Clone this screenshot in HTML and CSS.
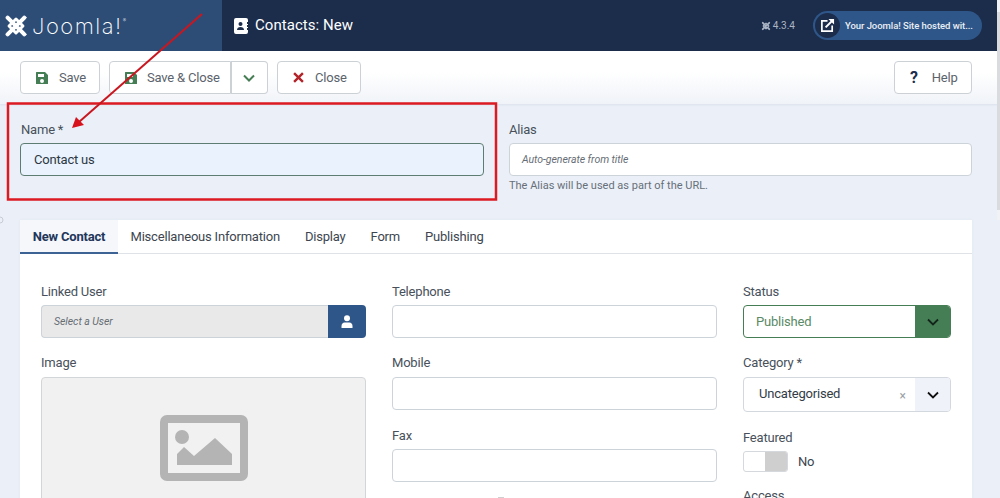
FILE: index.html
```html
<!DOCTYPE html>
<html lang="en">
<head>
<meta charset="utf-8">
<title>Contacts: New</title>
<link rel="stylesheet" href="styles.css">
</head>
<body>
<header class="topbar">
  <div class="brand">
    <svg class="brand-mark" viewBox="0 0 28 28" aria-hidden="true"><g fill="none" stroke="#fff" stroke-linecap="round" stroke-linejoin="round"><path stroke-width="4.400" d="M6 6 22 22M22 6 6 22"/><path stroke-width="3.200" d="M14 6.500 21.500 14 14 21.500 6.500 14z"/><circle cx="5" cy="5" r="1.800" fill="#fff"/><circle cx="23" cy="5" r="1.800" fill="#fff"/><circle cx="5" cy="23" r="1.800" fill="#fff"/><circle cx="23" cy="23" r="1.800" fill="#fff"/></g></svg>
    <span class="brand-name">Joomla!<sup>®</sup></span>
  </div>
  <div class="bar-main">
    <h1 class="page-title">
      <svg class="title-icon" viewBox="0 0 14 16" aria-hidden="true"><path fill="#fff" d="M2 0h10a2 2 0 0 1 2 2v2h-1v2h1v1h-1v2h1v1h-1v2h1v2a2 2 0 0 1-2 2H2a2 2 0 0 1-2-2V2a2 2 0 0 1 2-2z"/><circle cx="6.500" cy="6" r="2" fill="#1c2d4c"/><path fill="#1c2d4c" d="M3 12c0-2 1.400-3 3.500-3s3.500 1 3.500 3z"/></svg>
      <span class="title-text">Contacts: New</span>
    </h1>
    <div class="version">
      <svg class="version-mark" viewBox="0 0 28 28" aria-hidden="true"><g fill="none" stroke="#aab4c4" stroke-linecap="round" stroke-linejoin="round"><path stroke-width="5" d="M5 5 23 23M23 5 5 23"/><path stroke-width="3" d="M14 6 22 14 14 22 6 14z"/></g></svg>
      4.3.4
    </div>
    <div class="site-pill">
      <span class="pill-icon"><svg viewBox="0 0 16 16" aria-hidden="true"><path fill="none" stroke="#fff" stroke-width="1.800" d="M8 3H2v11h11V8"/><path fill="none" stroke="#fff" stroke-width="2.200" d="M6 10 14 2"/><path fill="#fff" d="M9 1h6v6z"/></svg></span>
      <span class="pill-text">Your Joomla! Site hosted wit...</span>
    </div>
  </div>
</header>

<nav class="toolbar">
  <button class="btn btn-save"><svg class="ico" viewBox="0 0 14 14" aria-hidden="true"><path fill="#457d54" fill-rule="evenodd" d="M1.500 1H10l3 3v8.500a.5.5 0 0 1-.5.5h-11a.5.5 0 0 1-.5-.5v-11a.5.5 0 0 1 .5-.5zM3 3v3h6V3zm4 5a2 2 0 1 0 0 4 2 2 0 0 0 0-4z"/></svg>Save</button>
  <div class="btn-group">
    <button class="btn btn-main"><svg class="ico" viewBox="0 0 14 14" aria-hidden="true"><path fill="#457d54" fill-rule="evenodd" d="M1.500 1H10l3 3v8.500a.5.5 0 0 1-.5.5h-11a.5.5 0 0 1-.5-.5v-11a.5.5 0 0 1 .5-.5zM3 3v3h6V3zm4 5a2 2 0 1 0 0 4 2 2 0 0 0 0-4z"/></svg>Save &amp; Close</button>
    <button class="btn btn-caret"><svg class="chev" viewBox="0 0 12 8" aria-hidden="true"><path fill="none" stroke="#457d54" stroke-width="2" d="M1 1.500 6 6.500 11 1.500"/></svg></button>
  </div>
  <button class="btn btn-close"><svg class="ico ico-x" viewBox="0 0 10 10" aria-hidden="true"><path stroke="#b2232a" stroke-width="2.200" d="M1 1 9 9M9 1 1 9"/></svg>Close</button>
  <button class="btn btn-help"><span class="help-mark">?</span>Help</button>
</nav>

<main class="content">
  <section class="title-row">
    <div class="field">
      <label class="label label-name">Name *</label>
      <div class="input input-filled">Contact us</div>
    </div>
    <div class="field">
      <label class="label">Alias</label>
      <div class="input input-hint">Auto-generate from title</div>
      <p class="help-text">The Alias will be used as part of the URL.</p>
    </div>
  </section>

  <section class="card">
    <div class="tabs">
      <div class="tab tab-active">New Contact</div>
      <div class="tab">Miscellaneous Information</div>
      <div class="tab">Display</div>
      <div class="tab">Form</div>
      <div class="tab">Publishing</div>
    </div>
    <div class="columns">
      <div class="col">
        <div class="field-row">
          <label class="label">Linked User</label>
          <div class="user-select">
            <div class="user-value">Select a User</div>
            <div class="user-btn"><svg viewBox="0 0 12 13" aria-hidden="true"><circle cx="6" cy="3.300" r="3" fill="#fff"/><path fill="#fff" d="M0.500 13v-2c0-2 1.500-3.500 3-3.500h5c1.500 0 3 1.500 3 3.500v2z"/></svg></div>
          </div>
        </div>
        <div class="field-row">
          <label class="label label-up">Image</label>
          <div class="image-box">
            <svg class="image-ph" viewBox="0 0 88 66" aria-hidden="true"><rect x="4" y="4" width="80" height="58" rx="3" fill="none" stroke="#b4b4b4" stroke-width="8"/><circle cx="22" cy="22" r="7" fill="#b4b4b4"/><path fill="#b4b4b4" d="M17 50V39l7-7 10 9 21-18 17 16v11z"/></svg>
          </div>
        </div>
      </div>
      <div class="col">
        <div class="field-row"><label class="label">Telephone</label><div class="input"></div></div>
        <div class="field-row"><label class="label label-up">Mobile</label><div class="input"></div></div>
        <div class="field-row"><label class="label">Fax</label><div class="input"></div></div>
      </div>
      <div class="col">
        <div class="field-row">
          <label class="label">Status</label>
          <div class="status-select">
            <span class="status-value">Published</span>
            <span class="status-btn"><svg class="chev" viewBox="0 0 12 8" aria-hidden="true"><path fill="none" stroke="#12241a" stroke-width="1.800" d="M1 1.500 6 6.500 11 1.500"/></svg></span>
          </div>
        </div>
        <div class="field-row">
          <label class="label label-up">Category *</label>
          <div class="cat-select">
            <span class="cat-value">Uncategorised</span>
            <span class="cat-clear">×</span>
            <span class="cat-btn"><svg class="chev" viewBox="0 0 12 8" aria-hidden="true"><path fill="none" stroke="#111" stroke-width="1.800" d="M1 1.500 6 6.500 11 1.500"/></svg></span>
          </div>
        </div>
        <div class="field-row field-featured">
          <label class="label">Featured</label>
          <div class="toggle-row">
            <span class="toggle"><span class="toggle-off"></span></span>
            <span class="toggle-text">No</span>
          </div>
        </div>
        <div class="field-row">
          <label class="label">Access</label>
        </div>
      </div>
    </div>
  </section>
</main>

<div class="scrollbar"><div class="scroll-thumb"></div></div>

<svg class="annot" viewBox="0 0 1000 498" aria-hidden="true">
  <circle cx="0" cy="220" r="3" fill="none" stroke="#c6cbd4"/>
  <path d="M498 497.500h6" stroke="#cfcfcf"/>
  <rect x="8" y="103.500" width="488" height="96" fill="none" stroke="#dc1a22" stroke-width="2.500"/>
  <path d="M202 14 79 122" stroke="#c9161f" stroke-width="2" fill="none"/>
  <path d="M72 128 76 117 84 125z" fill="#d8121c"/>
</svg>
</body>
</html>
```

FILE: styles.css
```css
* { box-sizing: border-box; }
html, body { margin: 0; height: 498px; overflow: hidden; }
body { background: #ebf0f8; font-family: Roboto, "Liberation Sans", sans-serif; font-size: 13px; letter-spacing: -.2px; color: #3b4450; position: relative; }

.topbar { display: flex; height: 51px; background: #1c2d4c; color: #fff; }
.brand { width: 222px; background: #2d4d77; display: flex; align-items: center; padding-left: 3px; }
.brand-mark { width: 26px; height: 26px; }
.brand-name { font-family: Inter, sans-serif; font-weight: 200; font-size: 22px; margin-left: 3px; letter-spacing: 1.500px; line-height: 1; }
.brand-name sup { font-size: 5px; vertical-align: 12px; line-height: 0; letter-spacing: 0; }
.bar-main { flex: 1; display: flex; align-items: center; padding: 0 18px 0 12px; }
.page-title { display: flex; align-items: center; gap: 7px; margin: 0; font-size: 15px; font-weight: 400; letter-spacing: .05px; flex: 1; }
.title-text { margin-bottom: 2px; }
.title-icon { width: 14px; height: 16px; }
.version { display: flex; align-items: center; gap: 2px; font-size: 10px; letter-spacing: 0; color: #aab4c4; margin-right: 18px; }
.version-mark { width: 10px; height: 10px; }
.site-pill { width: 169px; height: 29px; display: flex; align-items: center; background: #2f5688; border-radius: 15px; padding-left: 2px; }
.pill-icon { width: 25px; height: 25px; border-radius: 50%; background: #1c2d4c; display: flex; align-items: center; justify-content: center; }
.pill-icon svg { width: 15px; height: 15px; }
.pill-text { font-size: 9.500px; letter-spacing: -.05px; font-weight: 500; margin-left: 5px; white-space: nowrap; color: #e9eef5; }

.toolbar { height: 53px; display: flex; align-items: center; gap: 9px; padding: 0 28px 0 20px; background: linear-gradient(#fff 40%, #f0f3f8); box-shadow: 0 1px 2px rgba(30,50,80,.08); }
.btn { height: 33px; display: inline-flex; align-items: center; white-space: nowrap; background: #fff; border: 1px solid #ccd1d6; border-radius: 4px; padding: 0 14px; font: 400 13px Roboto, sans-serif; letter-spacing: -.2px; color: #5b636c; }
.btn-save { width: 80px; }
.ico { width: 14px; height: 14px; margin-right: 10px; flex: none; }
.ico-x { width: 11px; height: 11px; margin-right: 11px; margin-left: 1px; }
.chev { width: 12px; height: 8px; }
.btn-group { display: flex; }
.btn-main { border-radius: 4px 0 0 4px; width: 122px; }
.btn-main .ico { margin-right: 9px; }
.btn-caret { border-left: 0; border-radius: 0 4px 4px 0; width: 37px; padding: 0; justify-content: center; box-shadow: inset 1px 0 0 #ccd1d6; }
.btn-close { width: 84px; }
.btn-help { margin-left: auto; width: 78px; padding-left: 15px; }
.help-mark { font-weight: 700; font-size: 16px; color: #1c2d4c; width: 11px; margin-right: 14px; text-align: center; }

.content { padding: 0 28px 0 20px; }
.title-row { display: grid; grid-template-columns: 464px 463px; column-gap: 25px; padding-top: 17px; height: 116px; }
.field { display: flex; flex-direction: column; }
.label { display: block; height: 22px; line-height: 18px; font-size: 13px; color: #48515b; }
.label-name { padding-left: 1px; }
.label-up { line-height: 16px; }
.input { height: 33px; background: #fff; border: 1px solid #ccd3d9; border-radius: 4px; }
.input-filled { background: #e9f2fd; border-color: #5d7d72; line-height: 31px; padding-left: 13px; color: #2c3843; font-size: 13px; }
.input-hint { font-style: italic; font-size: 10.500px; letter-spacing: -.05px; line-height: 32px; padding-left: 12px; color: #666d75; }
.help-text { margin: 2px 0 0; font-size: 11px; letter-spacing: 0; line-height: 16px; color: #676f78; }

.card { background: #fff; height: 300px; width: 952px; box-shadow: 0 0 3px rgba(30,50,80,.05); }
.tabs { display: flex; height: 34px; border-bottom: 1px solid #dfe3e8; }
.tab { padding: 0 12.500px; font-size: 13px; line-height: 34px; color: #3d4650; }
.tab-active { width: 98px; padding: 0; text-align: center; font-weight: 700; color: #22365a; background: #f5f7fb; border-bottom: 2px solid #3d6394; height: 34px; }
.columns { display: grid; grid-template-columns: 325px 325px 208px; column-gap: 26px; padding: 29px 21px 0; }
.field-row { margin-bottom: 17px; }
.col { min-width: 0; }
.user-select { display: flex; height: 33px; }
.user-value { flex: 1; background: #e9e9e9; border: 1px solid #ccd3d9; border-right: 0; border-radius: 4px 0 0 4px; font-style: italic; font-size: 10.500px; letter-spacing: -.05px; line-height: 32px; padding-left: 12px; color: #666d75; }
.user-btn { width: 38px; background: #2f5688; border-radius: 0 4px 4px 0; display: flex; align-items: center; justify-content: center; }
.user-btn svg { width: 12px; height: 13px; }
.image-box { height: 160px; background: #f1f1f1; border: 1px solid #d3d6d9; border-radius: 4px 4px 0 0; display: flex; justify-content: center; padding-top: 37px; }
.image-ph { width: 88px; height: 66px; }
.status-select { display: flex; height: 33px; border: 1px solid #457d54; border-radius: 4px; overflow: hidden; }
.status-value { flex: 1; padding-left: 12px; line-height: 31px; font-size: 13px; color: #5a8a66; }
.status-btn { width: 35px; background: #457d54; display: flex; align-items: center; justify-content: center; }
.cat-select { display: flex; align-items: center; height: 35px; border: 1px solid #d3d8de; border-radius: 4px; overflow: hidden; }
.cat-value { flex: 1; padding: 0 0 3px 15px; font-size: 13px; color: #333c46; }
.cat-clear { font-size: 12px; letter-spacing: 0; color: #9a9fa6; margin-right: 9px; margin-top: 3px; }
.cat-btn { width: 35px; align-self: stretch; background: #eff3f9; display: flex; align-items: center; justify-content: center; }
.field-featured { margin-top: 17px; margin-bottom: 15px; }
.toggle-row { display: flex; align-items: center; height: 21px; gap: 10px; }
.toggle { width: 45px; height: 21px; border: 1px solid #d5d8dc; border-radius: 3px; background: #fff; display: flex; justify-content: flex-end; overflow: hidden; }
.toggle-off { width: 22px; background: #cfcfcf; }
.toggle-text { font-size: 13px; color: #3b4450; }

.scrollbar { position: absolute; top: 0; right: 0; width: 3px; height: 220px; padding-top: 12px; background: #f0f2f6; }
.scroll-thumb { height: 198px; background: #d9dbdf; }
.annot { position: absolute; left: 0; top: 0; width: 1000px; height: 498px; pointer-events: none; }
```
